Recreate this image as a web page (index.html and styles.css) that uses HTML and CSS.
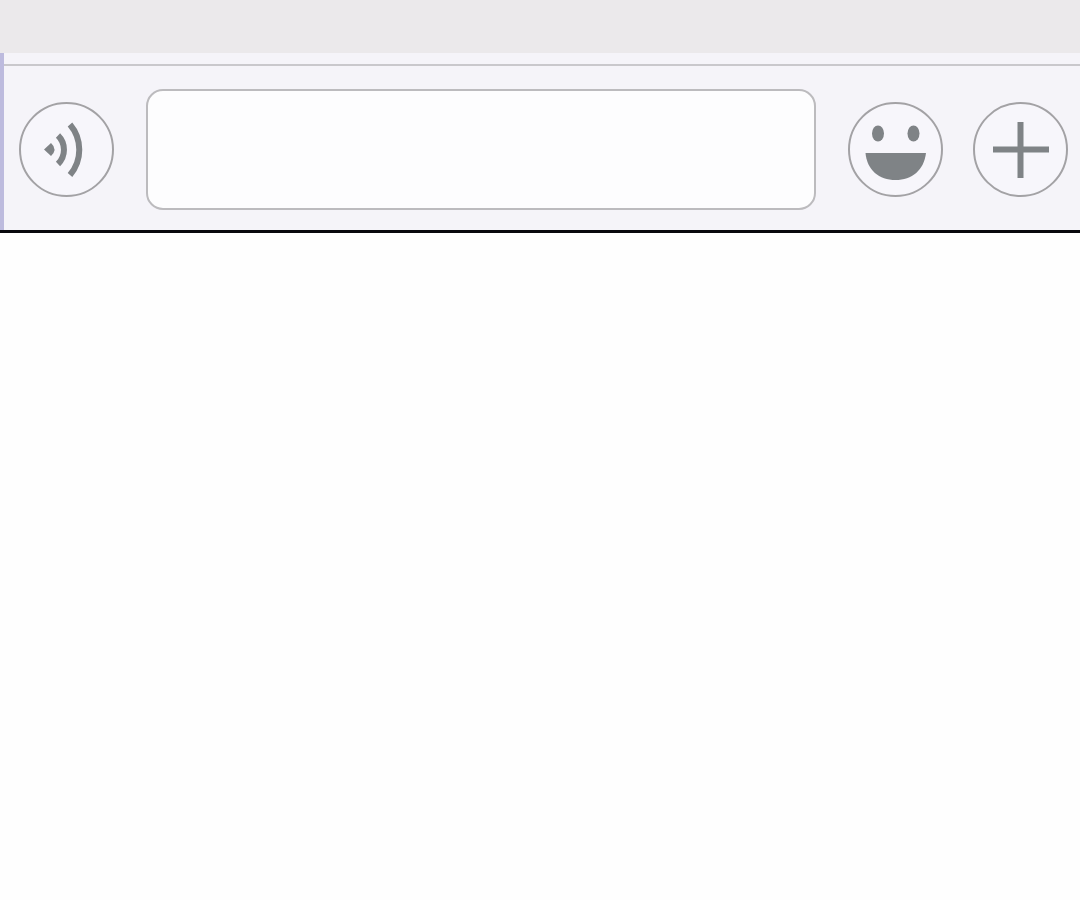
FILE: index.html
```
<!DOCTYPE html>
<html lang="en">
<head>
  <meta charset="UTF-8">
  <meta name="viewport" content="width=device-width, initial-scale=1">
  <title>Chat</title>
  <link rel="stylesheet" href="styles.css">
</head>
<body>

  <div class="messages"></div>

  <div class="chat-bar">
    <div class="chat-inner">
      <form class="composer">
        <button type="button" class="icon-btn" aria-label="Voice message">
          <svg viewBox="0 0 95 95">
            <path class="fill" d="M25 47.5 L32 41 Q39 47.5 32 54 Z"/>
            <path class="wave" d="M39 33.5 A20 20 0 0 1 39 62"/>
            <path class="wave" d="M51 22.500 A39 39 0 0 1 51 73"/>
          </svg>
        </button>

        <input type="text" class="message-input" aria-label="Message">

        <div class="actions">
          <button type="button" class="icon-btn" aria-label="Emoji">
            <svg viewBox="0 0 95 95">
              <ellipse class="fill" cx="30" cy="31.500" rx="6" ry="8"/>
              <ellipse class="fill" cx="65.500" cy="31.500" rx="6" ry="8"/>
              <path class="fill" d="M17.500 51 H78 C76 68 64 78 47.500 78 C31 78 19 68 17.500 51 Z"/>
            </svg>
          </button>
          <button type="button" class="icon-btn" aria-label="More">
            <svg viewBox="0 0 95 95">
              <path class="plus" d="M47.500 20 V76 M20 47.500 H76"/>
            </svg>
          </button>
        </div>
      </form>
    </div>
  </div>

</body>
</html>
```
FILE: styles.css
```
body {
  margin: 0;
  background: #fefefe;
  font-family: "Liberation Sans", Arial, sans-serif;
}

.messages {
  height: 53px;
  background: #ebe9eb;
}

.chat-bar {
  background: #f5f4f9;
  border-bottom: 3px solid #08080c;
}

.chat-inner {
  padding-top: 11px;
  border-left: 4px solid #bdbbde;
}

.composer {
  display: flex;
  align-items: center;
  gap: 32px;
  padding: 23px 12px 20px 15px;
  border-top: 2px solid #c9c8cc;
}

.message-input {
  flex: 1;
  min-width: 0;
  height: 121px;
  box-sizing: border-box;
  padding: 0 20px;
  border: 2px solid #bcbbbe;
  border-radius: 17px;
  background: #fdfdfe;
  font-family: inherit;
  font-size: 40px;
  outline: none;
}

.actions {
  display: flex;
  gap: 30px;
}

.icon-btn {
  flex: none;
  width: 95px;
  height: 95px;
  box-sizing: border-box;
  padding: 0;
  border: 2px solid #a3a2a5;
  border-radius: 50%;
  background: #f7f6fb;
  cursor: pointer;
}

.icon-btn svg {
  display: block;
  width: 95px;
  height: 95px;
  margin: -2px;
}

.fill {
  fill: #7f8386;
}

.wave {
  fill: none;
  stroke: #7f8386;
  stroke-width: 6;
}

.plus {
  fill: none;
  stroke: #7f8386;
  stroke-width: 6;
}
```
